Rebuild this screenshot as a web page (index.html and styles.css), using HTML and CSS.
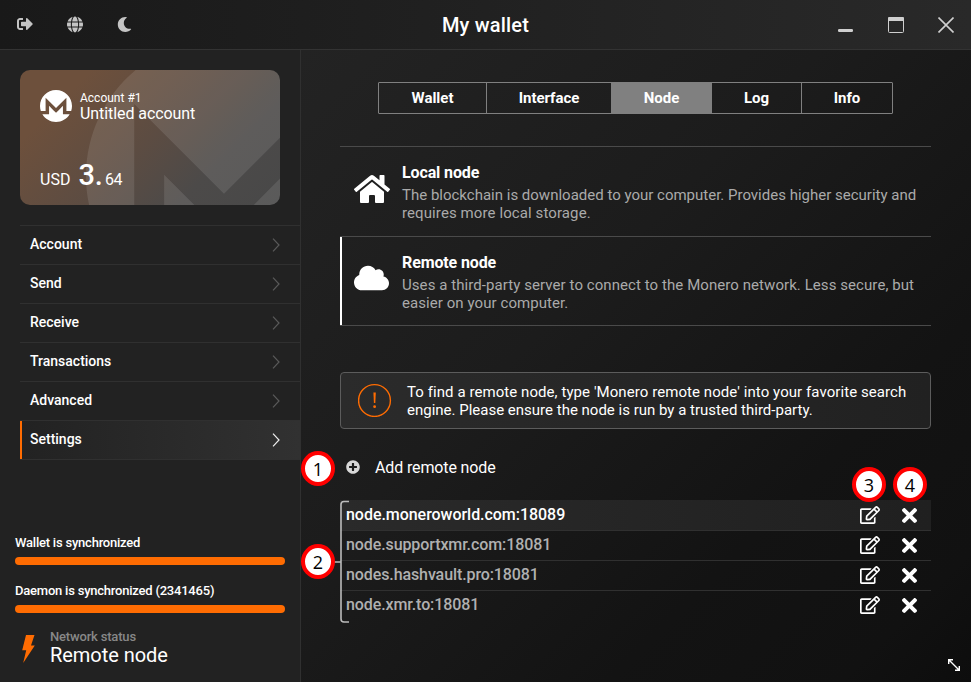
FILE: index.html
```html
<!DOCTYPE html>
<html lang="en">
<head>
<meta charset="utf-8">
<title>My wallet</title>
<link rel="stylesheet" href="styles.css">
</head>
<body>
<svg class="defs" width="0" height="0" aria-hidden="true">
  <symbol id="edit" viewBox="0 0 576 512"><path d="M402.3 344.9l32-32c5-5 13.7-1.5 13.7 5.7V464c0 26.5-21.5 48-48 48H48c-26.5 0-48-21.5-48-48V112c0-26.5 21.5-48 48-48h273.5c7.1 0 10.7 8.6 5.7 13.7l-32 32c-1.5 1.5-3.5 2.3-5.7 2.3H48v352h352V350.5c0-2.1.8-4.1 2.3-5.6zm156.6-201.8L296.3 405.7l-90.4 10c-26.2 2.9-48.5-19.2-45.6-45.6l10-90.4L432.9 17.1c22.9-22.9 59.9-22.9 82.7 0l43.2 43.2c22.9 22.9 22.9 60 .1 82.8zM460.1 174L402 115.9 216.2 301.8l-7.3 65.3 65.3-7.3L460.1 174zm64.8-79.7l-43.2-43.2c-4.1-4.1-10.8-4.1-14.8 0L436 82l58.1 58.1 30.9-30.9c4-4.2 4-10.8-.1-14.9z"/></symbol>
  <symbol id="times" viewBox="0 80 352 352"><path d="M242.72 256l100.07-100.07c12.28-12.28 12.28-32.19 0-44.48l-22.24-22.24c-12.28-12.28-32.19-12.28-44.48 0L176 189.28 75.93 89.21c-12.28-12.28-32.19-12.28-44.48 0L9.21 111.45c-12.28 12.28-12.28 32.19 0 44.48L109.28 256 9.21 356.07c-12.28 12.28-12.28 32.19 0 44.48l22.24 22.24c12.28 12.28 32.2 12.28 44.48 0L176 322.72l100.07 100.07c12.28 12.28 32.2 12.28 44.48 0l22.24-22.24c12.28-12.28 12.28-32.19 0-44.48L242.72 256z"/></symbol>
  <symbol id="monero" viewBox="0 0 24 24"><path d="M12 0C5.365 0 0 5.373 0 12.015c0 1.335.228 2.607.618 3.81h3.577V5.729L12 13.545l7.805-7.815v10.095h3.577c.389-1.203.618-2.475.618-3.81C24 5.375 18.635 0 12 0zm-1.788 15.307l-3.417-3.421v6.351H1.758C3.87 21.689 7.678 24 12 24s8.162-2.311 10.245-5.764h-5.04v-6.351l-3.386 3.421-1.788 1.79-1.814-1.79h-.005z"/></symbol>
  <symbol id="chevron" viewBox="0 0 8 14"><path d="M1 .7 7 7 1 13.3" fill="none" stroke="currentColor" stroke-width="1.2"/></symbol>
</svg>

<header class="titlebar">
  <div class="tools">
    <svg class="t-out" viewBox="0 0 512 512"><path d="M497 273L329 441c-15 15-41 4.5-41-17v-96H152c-13.3 0-24-10.7-24-24v-96c0-13.3 10.7-24 24-24h136V88c0-21.4 25.9-32 41-17l168 168c9.3 9.4 9.3 24.6 0 34zM192 436v-40c0-6.6-5.4-12-12-12H96c-17.7 0-32-14.3-32-32V160c0-17.7 14.3-32 32-32h84c6.6 0 12-5.4 12-12V76c0-6.6-5.4-12-12-12H96c-53 0-96 43-96 96v192c0 53 43 96 96 96h84c6.6 0 12-5.4 12-12z"/></svg>
    <svg class="t-globe" viewBox="0 0 496 512"><path d="M336.5 160C322 70.7 287.8 8 248 8s-74 62.7-88.5 152h177zM152 256c0 22.2 1.2 43.5 3.3 64h185.3c2.1-20.5 3.3-41.8 3.3-64s-1.2-43.5-3.3-64H155.3c-2.1 20.5-3.3 41.8-3.3 64zm324.7-96c-28.6-67.9-86.5-120.4-158-141.6 24.4 33.8 41.2 84.7 50 141.6h108zM177.2 18.4C105.8 39.6 47.8 92.1 19.3 160h108c8.7-56.9 25.5-107.8 49.9-141.6zM487.4 192H372.7c2.1 21 3.3 42.5 3.3 64s-1.2 43-3.3 64h114.6c5.5-20.5 8.6-41.8 8.6-64s-3.1-43.5-8.5-64zM120 256c0-21.5 1.2-43 3.3-64H8.6C3.2 212.5 0 233.8 0 256s3.2 43.5 8.6 64h114.6c-2-21-3.2-42.5-3.2-64zm39.5 96c14.5 89.3 48.7 152 88.5 152s74-62.7 88.5-152h-177zm159.3 141.6c71.4-21.2 129.4-73.7 158-141.6h-108c-8.8 56.9-25.6 107.8-50 141.6zM19.3 352c28.6 67.9 86.5 120.4 158 141.6-24.4-33.8-41.2-84.7-50-141.6h-108z"/></svg>
    <svg class="t-moon" viewBox="0 0 512 512"><path d="M283.211 512c78.962 0 151.079-35.925 198.857-94.792 7.068-8.708-.639-21.43-11.562-19.35-124.203 23.654-238.262-71.576-238.262-196.954 0-72.222 38.662-138.635 101.498-174.394 9.686-5.512 7.25-20.197-3.756-22.23A258.156 258.156 0 0 0 283.211 0c-141.309 0-256 114.511-256 256 0 141.309 114.511 256 256 256z"/></svg>
  </div>
  <h1 class="title">My wallet</h1>
  <div class="window-buttons">
    <svg width="16" height="16" viewBox="0 0 16 16"><rect x="0" y="12" width="15" height="3" rx="1.2"/></svg>
    <svg width="16" height="16" viewBox="0 0 16 16"><rect x=".5" y=".5" width="15" height="15" rx="1" fill="none" stroke="currentColor"/><path d="M0 1.2Q0 0 1.2 0H14.8Q16 0 16 1.2V4H0z"/></svg>
    <svg width="16" height="16" viewBox="0 0 16 16"><path d="M.5.5l15 15M15.5.5l-15 15" fill="none" stroke="currentColor" stroke-width="1.6"/></svg>
  </div>
</header>

<div class="body">
  <aside class="sidebar">
    <section class="card">
      <svg class="watermark"><use href="#monero"/></svg>
      <div class="account">
        <svg class="logo"><use href="#monero"/></svg>
        <div>
          <div class="account-no">Account #1</div>
          <div class="account-name">Untitled account</div>
        </div>
      </div>
      <div class="balance"><span class="cur">USD</span><span class="whole">3.</span><span class="cents">64</span></div>
    </section>
    <nav class="menu">
      <a class="item">Account<svg><use href="#chevron"/></svg></a>
      <a class="item">Send<svg><use href="#chevron"/></svg></a>
      <a class="item">Receive<svg><use href="#chevron"/></svg></a>
      <a class="item">Transactions<svg><use href="#chevron"/></svg></a>
      <a class="item">Advanced<svg><use href="#chevron"/></svg></a>
      <a class="item active">Settings<svg><use href="#chevron"/></svg></a>
    </nav>
    <footer class="status">
      <div class="sync">Wallet is synchronized</div>
      <div class="bar"></div>
      <div class="sync">Daemon is synchronized (2341465)</div>
      <div class="bar"></div>
      <div class="network">
        <svg class="bolt" viewBox="0 0 13 28"><path d="M4 0H12.5L9 10.5H12.8L1.2 28 4.2 15.2H.2z"/></svg>
        <div>
          <div class="net-label">Network status</div>
          <div class="net-value">Remote node</div>
        </div>
      </div>
    </footer>
  </aside>

  <main class="main">
    <div class="tabs">
      <div class="tab w-wallet">Wallet</div>
      <div class="tab w-interface">Interface</div>
      <div class="tab w-node on">Node</div>
      <div class="tab w-log">Log</div>
      <div class="tab w-info">Info</div>
    </div>

    <div class="options">
      <section class="option">
        <svg class="home" viewBox="0 0 576 512"><path d="M280.37 148.26L96 300.11V464a16 16 0 0 0 16 16l112.06-.29a16 16 0 0 0 15.92-16V368a16 16 0 0 1 16-16h64a16 16 0 0 1 16 16v95.64a16 16 0 0 0 16 16.05L464 480a16 16 0 0 0 16-16V300L295.67 148.26a12.19 12.19 0 0 0-15.3 0zM571.6 251.47L488 182.56V44.05a12 12 0 0 0-12-12h-56a12 12 0 0 0-12 12v72.61L318.47 43a48 48 0 0 0-61 0L4.34 251.47a12 12 0 0 0-1.6 16.9l25.5 31A12 12 0 0 0 45.15 301l235.22-193.74a12.19 12.19 0 0 1 15.3 0L530.9 301a12 12 0 0 0 16.9-1.6l25.5-31a12 12 0 0 0-1.7-16.93z"/></svg>
        <div>
          <h2>Local node</h2>
          <p class="snug">The blockchain is downloaded to your computer. Provides higher security and<br><span class="wide">requires more local storage.</span></p>
        </div>
      </section>
      <section class="option chosen">
        <svg class="cloud" viewBox="0 0 640 512"><path d="M537.6 226.6c4.1-10.7 6.4-22.4 6.4-34.6 0-53-43-96-96-96-19.7 0-38.1 6-53.3 16.2C367 64.2 315.3 32 256 32c-88.4 0-160 71.6-160 160 0 2.7.1 5.4.2 8.1C40.2 219.8 0 273.2 0 336c0 79.5 64.5 144 144 144h368c70.7 0 128-57.3 128-128 0-61.9-44-113.6-102.4-125.4z"/></svg>
        <div>
          <h2>Remote node</h2>
          <p>Uses a third-party server to connect to the Monero network. Less secure, but<br>easier on your computer.</p>
        </div>
      </section>
    </div>

    <div class="notice">
      <svg width="34" height="34" viewBox="0 0 34 34"><circle cx="16.5" cy="17.5" r="15.9" fill="none" stroke="currentColor" stroke-width="1.4"/><path d="M15.4 9.5h2.4l-.5 10.4h-1.4z"/><circle cx="16.6" cy="23.7" r="1.4"/></svg>
      <p>To find a remote node, type 'Monero remote node' into your favorite search<br><span class="snug">engine. Please ensure the node is run by a trusted third-party.</span></p>
    </div>

    <div class="add">
      <svg viewBox="0 0 512 512"><path d="M256 8C119 8 8 119 8 256s111 248 248 248 248-111 248-248S393 8 256 8zm144 276c0 6.6-5.4 12-12 12h-92v92c0 6.6-5.4 12-12 12h-56c-6.6 0-12-5.4-12-12v-92h-92c-6.6 0-12-5.4-12-12v-56c0-6.6 5.4-12 12-12h92v-92c0-6.6 5.4-12 12-12h56c6.6 0 12 5.4 12 12v92h92c6.6 0 12 5.4 12 12v56z"/></svg>
      <span>Add remote node</span>
    </div>

    <div class="nodes">
      <div class="node current"><span>node.moneroworld.com:18089</span><svg class="edit"><use href="#edit"/></svg><svg class="times"><use href="#times"/></svg></div>
      <div class="node"><span>node.supportxmr.com:18081</span><svg class="edit"><use href="#edit"/></svg><svg class="times"><use href="#times"/></svg></div>
      <div class="node"><span>nodes.hashvault.pro:18081</span><svg class="edit"><use href="#edit"/></svg><svg class="times"><use href="#times"/></svg></div>
      <div class="node"><span>node.xmr.to:18081</span><svg class="edit"><use href="#edit"/></svg><svg class="times"><use href="#times"/></svg></div>
    </div>
  </main>
</div>

<svg class="bracket" viewBox="0 0 16 124"><path d="M15 1.5H10Q7 1.5 7 4.5V119Q7 122 10 122H15M0 62H7" fill="none" stroke="#bbb" stroke-width="1.6"/></svg>
<div class="badge b1">1</div>
<div class="badge b2">2</div>
<div class="badge b3">3</div>
<div class="badge b4">4</div>
<svg class="resize" viewBox="0 0 12 12"><path d="M.7 5V.7H5M11.3 7V11.3H7M1 1 11 11" fill="none" stroke="#fff" stroke-width="1.4"/></svg>
</body>
</html>
```
FILE: styles.css
```css
* { box-sizing: border-box; }

body {
  margin: 0;
  width: 971px;
  height: 682px;
  overflow: hidden;
  position: relative;
  display: flex;
  flex-direction: column;
  background: #121212;
  color: #fff;
  font-family: Roboto, sans-serif;
}

svg { fill: currentColor; display: block; flex: none; }
.defs { position: absolute; }
h1, h2, p { margin: 0; }

.titlebar {
  height: 50px;
  flex: none;
  display: grid;
  grid-template-columns: 1fr auto 1fr;
  align-items: center;
  background: linear-gradient(90deg, #191919, #292929);
  border-bottom: 1px solid #333;
}
.tools { display: flex; align-items: center; padding-left: 17px; color: #c4c4c4; }
.tools svg { margin-top: -1px; }
.t-out { width: 16px; height: 16px; }
.tools .t-globe { width: 16px; height: 17px; margin-left: 34px; }
.tools .t-moon { width: 15px; height: 15px; margin-left: 34px; }
.title { font-size: 20px; font-weight: 500; letter-spacing: .2px; }
.window-buttons { display: flex; justify-content: flex-end; gap: 34px; padding-right: 17px; color: #cfcfcf; }

.body { flex: 1; display: flex; min-height: 0; }

.sidebar {
  width: 301px;
  flex: none;
  display: flex;
  flex-direction: column;
  background: #222;
  border-right: 1px solid #303030;
  padding-top: 20px;
}

.card {
  position: relative;
  overflow: hidden;
  width: 260px;
  height: 135px;
  margin-left: 20px;
  padding: 20px;
  border-radius: 10px;
  background: linear-gradient(135deg, #6d503c 18%, #5c4c42 50%, #4c4a49 74%, #484848);
}
.watermark { position: absolute; left: 66px; top: -32px; width: 276px; height: 276px; color: rgba(255, 255, 255, .1); }
.account { display: flex; gap: 8px; }
.logo { width: 32px; height: 32px; }
.account-no { font-size: 12px; line-height: 16px; }
.account-name { font-size: 16px; line-height: 16px; letter-spacing: -.07px; }
.balance { display: flex; align-items: baseline; margin-top: 35px; line-height: 36px; font-size: 16px; }
.whole { font-size: 29px; margin-left: 8px; font-weight: 500; }
.cents { margin-left: 2px; letter-spacing: -.3px; }

.menu { margin: 20px 0 0 20px; border-bottom: 1px solid #303030; }
.item {
  height: 39px;
  display: flex;
  align-items: center;
  justify-content: space-between;
  border-top: 1px solid #303030;
  padding: 0 20px 2px 10px;
  font-size: 14px;
  font-weight: 500;
}
.item svg { width: 8px; height: 14px; color: #5a5a5a; margin-top: 2px; }
.item.active { background: linear-gradient(90deg, #222, #313131); box-shadow: inset 2px 0 #ff6c02; }
.item.active svg { color: #eee; }

.status { margin: auto 15px 16px; }
.sync { font-size: 13px; font-weight: 500; line-height: 16px; margin-bottom: 6px; letter-spacing: -.22px; }
.bar { height: 8px; border-radius: 4px; background: #ff6c02; margin-bottom: 18px; }
.bar:nth-of-type(4) { margin-bottom: 16px; }
.network { display: flex; align-items: center; }
.bolt { width: 13px; height: 28px; margin: 2px 15px 0 7px; color: #ff6c02; }
.net-label { font-size: 13px; line-height: 15px; font-weight: 500; color: #888; letter-spacing: -.18px; }
.net-value { font-size: 20px; line-height: 22px; letter-spacing: -.05px; }

.main {
  flex: 1;
  padding: 32px 40px 0 39px;
  background: linear-gradient(135deg, #232323, #1c1c1c 40%, #131313 72%, #111 90%, #0d0d0d);
}
.tabs { display: flex; width: 515px; height: 32px; margin-left: 38px; border: 1px solid #808080; border-radius: 1px; }
.tab {
  display: flex;
  align-items: center;
  justify-content: center;
  font-size: 15px;
  font-weight: 700;
  letter-spacing: -.02px;
  border-right: 1px solid #808080;
}
.tab:last-child { border-right: 0; }
.w-wallet { width: 108px; }
.w-interface { width: 125px; }
.w-node { width: 100px; }
.w-log { width: 90px; }
.w-info { width: 90px; }
.tab.on { background: #808080; }

.options { margin-top: 32px; border-bottom: 1px solid #4a4a4a; }
.option { display: flex; height: 90px; border-top: 1px solid #4a4a4a; padding-top: 15px; }
.option.chosen { height: 89px; box-shadow: inset 2px 0 #fff; }
.home { width: 36px; height: 32px; margin: 11px 12px 0 14px; }
.cloud { width: 35px; height: 28px; margin: 12px 13px 0 14px; }
.option h2 { font-size: 16px; line-height: 22px; font-weight: 700; letter-spacing: -.12px; }
.option p { font-size: 15px; line-height: 18px; margin-top: 2px; color: #aaa; letter-spacing: .07px; white-space: nowrap; }
.option p.snug, .notice .snug { letter-spacing: 0; }
.wide { letter-spacing: .1px; }

.notice {
  display: flex;
  align-items: center;
  height: 57px;
  margin-top: 46px;
  padding-left: 17px;
  gap: 15px;
  border: 1px solid #5c5c5c;
  border-radius: 4px;
  background: linear-gradient(90deg, #2b2b2b, #212121);
}
.notice svg { color: #ff6c02; margin-top: -1px; }
.notice p { font-size: 15px; line-height: 18px; letter-spacing: .07px; white-space: nowrap; }

.add { display: flex; align-items: center; height: 24px; margin-top: 26px; padding-left: 6px; font-size: 16px; gap: 15px; letter-spacing: -.13px; }
.add svg { width: 14px; height: 14px; color: #d8d8d8; }

.nodes { margin-top: 21px; }
.node {
  display: flex;
  align-items: center;
  height: 30px;
  border-top: 1px solid #303030;
  padding: 0 14px 2px 6px;
  font-size: 16px;
  font-weight: 500;
  color: #b0b0b0;
  letter-spacing: -.1px;
}
.node.current { background: linear-gradient(90deg, #2a2a2a, #202020); border-color: transparent; color: #fff; letter-spacing: -.04px; }
.node span { flex: 1; }
.node svg { color: #fff; }
.edit { width: 20px; height: 18px; margin-right: 22px; }
.times { width: 15px; height: 15px; margin-top: 1px; }

.bracket { position: absolute; left: 334px; top: 500px; width: 16px; height: 124px; }
.badge {
  position: absolute;
  width: 34px;
  height: 35px;
  border: 4px solid #f00;
  border-radius: 50%;
  background: #fff;
  color: #000;
  font: 18px/28px "Open Sans", sans-serif;
  text-align: center;
}
.b1 { left: 301px; top: 451px; }
.b2 { left: 301px; top: 544px; }
.b3 { left: 852px; top: 467px; }
.b4 { left: 893px; top: 467px; }
.resize { position: absolute; left: 948px; top: 659px; width: 12px; height: 12px; }
```
